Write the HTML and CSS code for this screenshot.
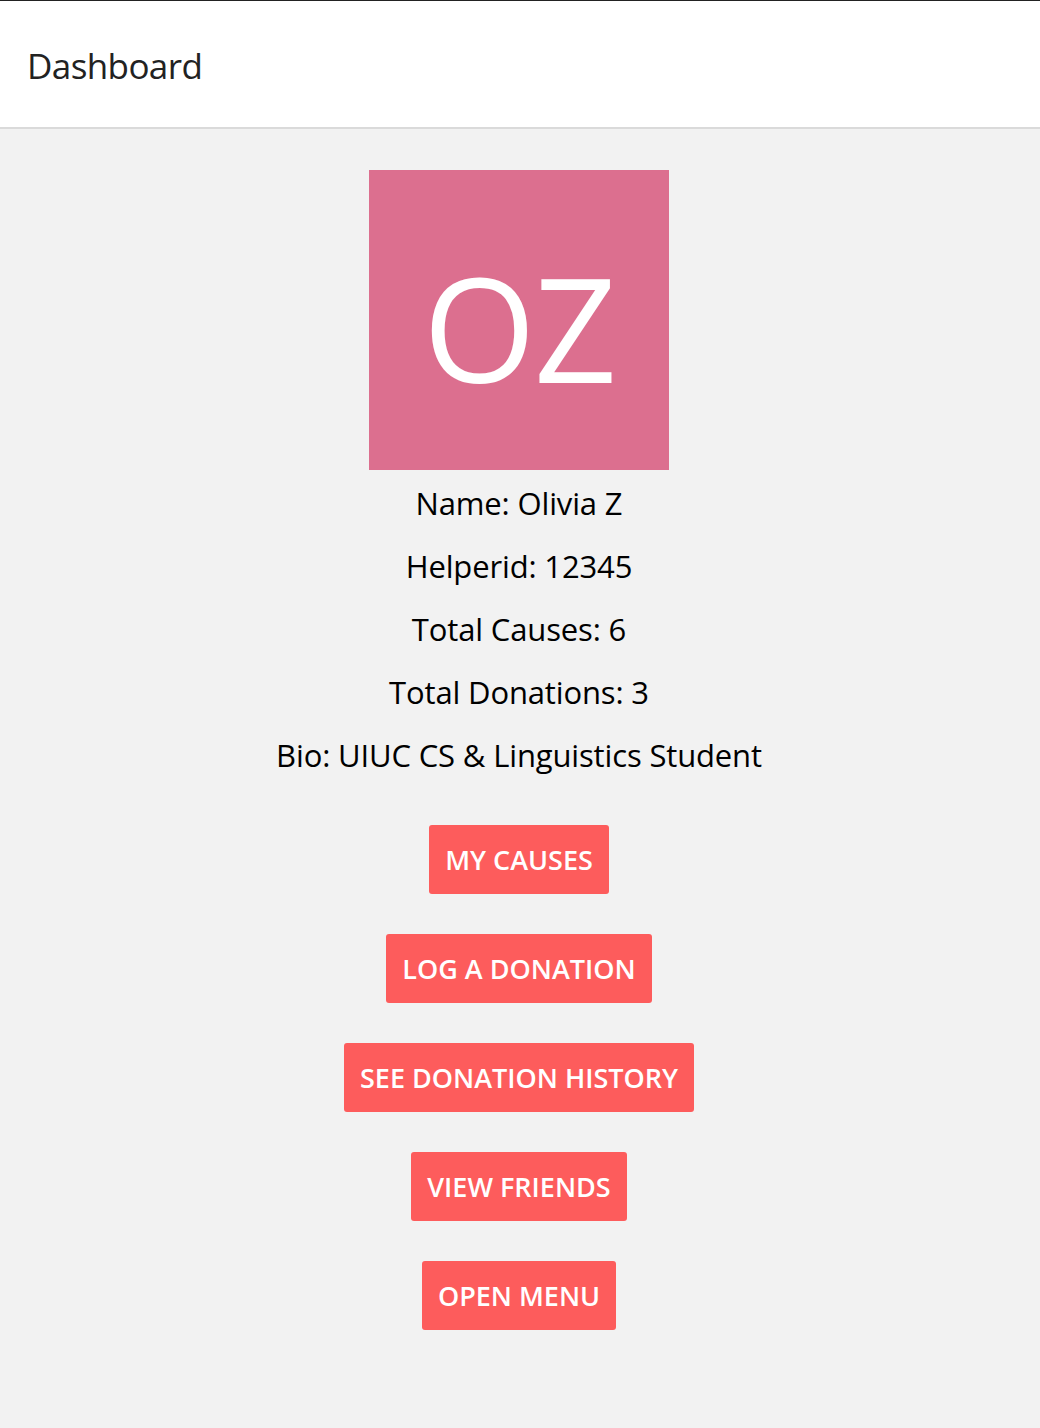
FILE: index.html
```html
<!DOCTYPE html>
<html>
<head>
<meta charset="utf-8">
<link rel="stylesheet" href="styles.css">
<title>Dashboard</title>
</head>
<body>
<header class="topbar">
  <h1 class="title">Dashboard</h1>
</header>
<main class="content">
  <div class="avatar">OZ</div>
  <div class="info">
    <p class="line">Name: Olivia Z</p>
    <p class="line">Helperid: 12345</p>
    <p class="line">Total Causes: 6</p>
    <p class="line">Total Donations: 3</p>
    <p class="line">Bio: UIUC CS &amp; Linguistics Student</p>
  </div>
  <div class="actions">
    <button class="btn">MY CAUSES</button>
    <button class="btn">LOG A DONATION</button>
    <button class="btn">SEE DONATION HISTORY</button>
    <button class="btn">VIEW FRIENDS</button>
    <button class="btn">OPEN MENU</button>
  </div>
</main>
</body>
</html>
```
FILE: styles.css
```css
html, body {
  margin: 0;
  padding: 0;
}
body {
  background: #f2f2f2;
  font-family: "Open Sans", "Noto Sans", sans-serif;
  color: #000;
  min-height: 1428px;
  border-top: 1px solid #222;
  box-sizing: border-box;
}
.topbar {
  background: #fff;
  height: 126px;
  border-bottom: 2px solid #dadada;
  display: flex;
  align-items: center;
  padding: 0 27px;
  box-sizing: content-box;
}
.title {
  margin: 3px 0 0;
  font-size: 35px;
  font-weight: 500;
  color: #222;
  letter-spacing: -0.6px;
}
.content {
  display: flex;
  flex-direction: column;
  align-items: center;
  padding: 41px 2px 0 0;
}
.avatar {
  width: 300px;
  height: 300px;
  background: #dc6f8f;
  color: #fff;
  display: flex;
  align-items: center;
  justify-content: center;
  font-size: 145px;
  font-weight: 400;
  padding-top: 12px;
  box-sizing: border-box;
  letter-spacing: -2px;
}
.info {
  display: flex;
  flex-direction: column;
  align-items: center;
  padding-top: 2px;
}
.line {
  margin: 0;
  line-height: 63px;
  font-size: 31px;
  letter-spacing: -0.15px;
}
.actions {
  display: flex;
  flex-direction: column;
  align-items: center;
  gap: 40px;
  padding-top: 38px;
}
.btn {
  height: 69px;
  padding: 0 16px;
  border: none;
  border-radius: 3px;
  background: #fd5c5c;
  color: #fff;
  font-family: "Open Sans", "Noto Sans", sans-serif;
  font-size: 27px;
  font-weight: 600;
  letter-spacing: 0;
}
```
